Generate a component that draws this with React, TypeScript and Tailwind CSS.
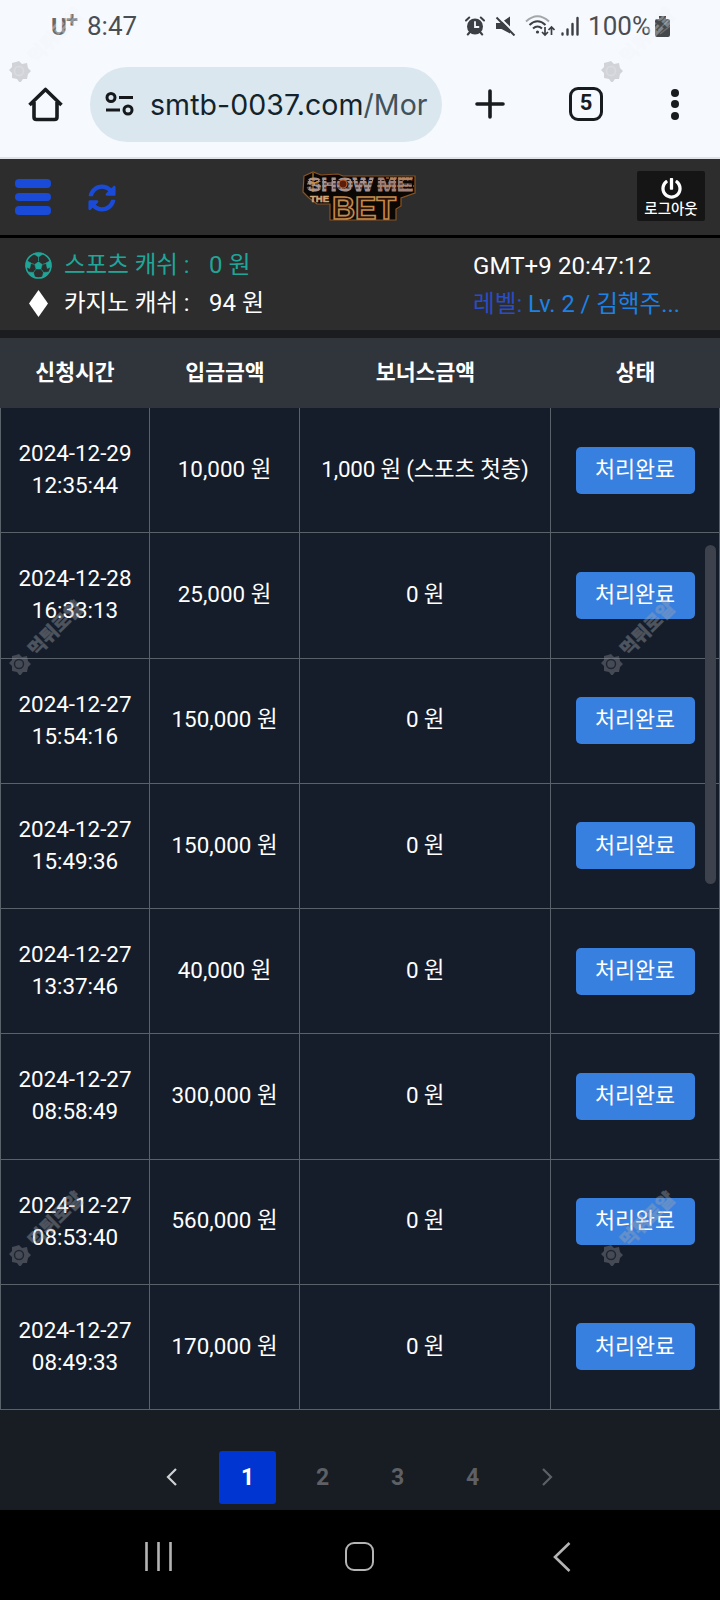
import { FaSyncAlt, FaPowerOff } from "react-icons/fa";

const rows = [
  { date: "2024-12-29", time: "12:35:44", amount: "10,000 원", bonus: "1,000 원 (스포츠 첫충)" },
  { date: "2024-12-28", time: "16:33:13", amount: "25,000 원", bonus: "0 원" },
  { date: "2024-12-27", time: "15:54:16", amount: "150,000 원", bonus: "0 원" },
  { date: "2024-12-27", time: "15:49:36", amount: "150,000 원", bonus: "0 원" },
  { date: "2024-12-27", time: "13:37:46", amount: "40,000 원", bonus: "0 원" },
  { date: "2024-12-27", time: "08:58:49", amount: "300,000 원", bonus: "0 원" },
  { date: "2024-12-27", time: "08:53:40", amount: "560,000 원", bonus: "0 원" },
  { date: "2024-12-27", time: "08:49:33", amount: "170,000 원", bonus: "0 원" },
];

function StatusBar() {
  return (
    <div className="flex h-[52px] items-center justify-between pl-[51px] pr-[50px] text-[26px] text-[#4a4d51]">
      <div className="flex items-center">
        <span className="mt-px w-[15px] text-[24px] font-bold leading-none text-[#66696c]">U</span>
        <span className="mb-3 w-[21px] text-[22px] font-bold leading-none text-[#66696c]">+</span>
        <span>8:47</span>
      </div>
      <div className="flex items-center">
        {/* alarm */}
        <svg className="mr-[10px]" width="20" height="20" viewBox="0 0 20 20" fill="none" stroke="#3c3f43" strokeWidth="2" strokeLinecap="round">
          <circle cx="10" cy="10.5" r="8" fill="#3c3f43" stroke="none" />
          <path d="M1 4.5 4.2 1.5M19 4.5 15.8 1.5M4.5 16.5 2.8 18.5M15.5 16.5 17.2 18.5" />
          <path d="M10 6v5h3.5" stroke="#f6f9fe" strokeWidth="1.8" />
        </svg>
        {/* muted */}
        <svg className="mr-[9px]" width="21" height="20" viewBox="0 0 21 20">
          <path d="M1 7h4.5L15 .5v17L6.500 13H1z" fill="#3c3f43" />
          <path d="M2.500 -.5 21 18" stroke="#f6f9fe" strokeWidth="2" />
          <path d="M1.500 1.500 19.500 19.500" stroke="#3c3f43" strokeWidth="2" />
        </svg>
        {/* wifi */}
        <svg className="mr-[6px]" width="30" height="22" viewBox="0 0 30 22" fill="none" stroke="#3c3f43" strokeWidth="2">
          <path d="M1 6.500Q12.500-4 24 6.500" stroke="#a3a7aa" />
          <path d="M4.500 10Q12.500 2.500 20.500 10M8 13.500Q12.500 9.500 17 13.500" />
          <circle cx="12.500" cy="17" r="1.600" fill="#3c3f43" stroke="none" />
          <path d="M20 12v8m-3-3 3 3 3-3M26.500 20v-8m-3 3 3-3 3 3" strokeWidth="1.700" />
        </svg>
        <svg className="mr-[9px]" width="18" height="20" viewBox="0 0 18 20" stroke="#3c3f43" strokeWidth="2.400" strokeLinecap="round">
          <path d="M1.500 17.500v1M6.500 13.500v5M11.500 8v10.500M16.500 2v16.500" />
        </svg>
        <span className="mr-[4px]">100%</span>
        <svg width="15" height="21" viewBox="0 0 15 21">
          <path d="M4 0h7v3h2q2 0 2 2v14q0 2-2 2H2q-2 0-2-2V5q0-2 2-2h2z" fill="#45484a" />
          <path d="M3 14 13 5M5 18l10-8" stroke="#6c6e70" strokeWidth="1.500" />
        </svg>
      </div>
    </div>
  );
}

function BrowserBar() {
  return (
    <div className="flex h-[105px] items-center pb-px">
      <svg className="ml-[28px]" width="35" height="35" viewBox="0 0 35 35" fill="none" stroke="#191c1f" strokeWidth="3.600" strokeLinejoin="round">
        <path d="M1.500 18 17.500 2.500 33.500 18M6 15v15q0 2.500 2.500 2.500h18q2.500 0 2.500-2.500V15" />
      </svg>
      <div className="ml-[27px] flex h-[75px] w-[352px] items-center rounded-full bg-[#dae7ef] pl-[15px]">
        <svg width="30" height="24" viewBox="0 0 30 24" fill="none" stroke="#16191c" strokeWidth="3">
          <circle cx="6" cy="5.500" r="4" />
          <path d="M14 5.500h14M1 18h14" />
          <circle cx="23" cy="18" r="4" />
        </svg>
        <div className="ml-[15px] mt-[2px] w-[280px] overflow-hidden whitespace-nowrap font-[Inter,sans-serif] text-[28.500px] tracking-[0.07px] text-[#13232b]">
          smtb-0037.com<span className="text-[#42525a]">/Mor</span>
        </div>
      </div>
      <svg className="ml-[33px]" width="30" height="30" viewBox="0 0 30 30" stroke="#191c1f" strokeWidth="3.600" strokeLinecap="round">
        <path d="M15 2v26M2 15h26" />
      </svg>
      <div className="ml-[64px] flex h-[34px] w-[34px] items-center justify-center rounded-[9px] border-[3.5px] border-[#191c1f] pb-[2px] text-[22px] font-bold leading-none text-[#191c1f]">
        5
      </div>
      <div className="ml-[68px] flex flex-col gap-[3.500px]">
        <i className="size-[8px] rounded-full bg-[#191c1f]" />
        <i className="size-[8px] rounded-full bg-[#191c1f]" />
        <i className="size-[8px] rounded-full bg-[#191c1f]" />
      </div>
    </div>
  );
}

function Logo() {
  return (
    <svg width="120" height="54" viewBox="0 0 120 54" fontFamily="'Liberation Sans', sans-serif" fontWeight="700">
      <path d="M4 6 13 2l8 3 17-1 5 2h72v17l-14 5v8l-5 3v11H30V34H17L9 28 3 22z" fill="#0b0705" stroke="#8a5320" strokeWidth="1.200" />
      <text x="7" y="21" fontSize="19" textLength="66" lengthAdjust="spacingAndGlyphs" fill="#a79391" stroke="#a79391" strokeWidth="1">SHOW</text>
      <text x="77" y="21" fontSize="19" textLength="36" lengthAdjust="spacingAndGlyphs" fill="#a08078" stroke="#a08078" strokeWidth="1">ME</text>
      <path d="M6 10.500h68M77 10.500h37M6 14h68M77 14h37M6 18h68M77 18h37" stroke="#1a0e0b" strokeWidth="0.900" strokeDasharray="3 1.500" />
      <path d="M77 16h37M86 8h28" stroke="#c98545" strokeWidth="1" strokeDasharray="3 1" />
      <circle cx="43" cy="14" r="4" fill="#5a1f0a" stroke="#c0612a" strokeWidth="1.200" />
      <path d="M13 3v19M7 14l12-2" stroke="#d9963c" strokeWidth="1" />
      <text x="10" y="32" fontSize="9" textLength="19" lengthAdjust="spacingAndGlyphs" fill="#d0a878" stroke="#d0a878" strokeWidth="0.500">THE</text>
      <text x="32" y="49" fontSize="32" textLength="64" lengthAdjust="spacingAndGlyphs" fill="#2a140b" stroke="#c48a4c" strokeWidth="1.600">BET</text>
    </svg>
  );
}

function SiteHeader() {
  return (
    <header className="flex h-[79px] items-center justify-between border-b-[3px] border-black bg-[#2d2d2d] pl-[15px] pr-[15px]">
      <div className="flex w-[250px] items-center">
        <div className="flex flex-col gap-[5px]">
          <i className="h-[8.500px] w-[36px] rounded-[4px] bg-[#194bd8]" />
          <i className="h-[8.500px] w-[36px] rounded-[4px] bg-[#194bd8]" />
          <i className="h-[8.500px] w-[36px] rounded-[4px] bg-[#194bd8]" />
        </div>
        <FaSyncAlt className="ml-[37px] mt-[2px] text-[28px] text-[#194bd8]" />
      </div>
      <Logo />
      <div className="flex w-[250px] justify-end">
        <div className="mb-[2px] flex h-[50px] w-[68px] flex-col items-center rounded-[2px] bg-[#151515] pt-[7px] text-[14.500px] text-white">
          <FaPowerOff className="text-[21px]" />
          <span className="mt-[3px] whitespace-nowrap font-medium leading-[16px]">로그아웃</span>
        </div>
      </div>
    </header>
  );
}

function Ball() {
  return (
    <svg width="27" height="27" viewBox="0 0 27 27" fill="#1fa698" stroke="#1fa698">
      <circle cx="13.500" cy="13.500" r="12.500" fill="none" strokeWidth="1.600" />
      <path d="M13.500 9.800 17.300 12.500 15.900 17H11.100L9.700 12.500z" strokeWidth="0.500" />
      <path d="M13.500 9V5M17.800 12.300 22 11M16.200 17.300 19 21M10.800 17.300 8 21M9.200 12.300 5 11" strokeWidth="0.700" />
      <path d="M8.500 1.700 13.500 5 18.500 1.700 13.500.9zM25.500 8.500 21 11l1.300 5.500 4-1.500zM1.500 8.500 6 11l-1.300 5.500-4-1.500zM17 26 18.500 20.500l5-.5-2 3.500zM10 26 8.500 20.500 3.500 20l2 3.500z" strokeWidth="0.500" />
    </svg>
  );
}

function Balance() {
  return (
    <div className="flex h-[92px] bg-[#2d2d2d] pt-[9px] text-[24px] leading-[38px] text-white">
      <div className="w-[473px] pl-[25px]">
        <div className="-mt-px flex h-[38px] items-center text-[#1fa698]">
          <Ball />
          <span className="ml-[12px] w-[145px] whitespace-nowrap text-[23.500px]">스포츠 캐쉬 :</span>
          <span>0 원</span>
        </div>
        <div className="flex h-[38px] items-center">
          <svg width="27" height="27" viewBox="0 0 27 27">
            <path d="M13.500 0 23 13.500 13.500 27 4 13.500z" fill="#fff" />
          </svg>
          <span className="ml-[12px] w-[145px] whitespace-nowrap text-[23.500px]">카지노 캐쉬 :</span>
          <span>94 원</span>
        </div>
      </div>
      <div className="whitespace-nowrap">
        <div className="h-[38px] tracking-[0.1px]">GMT+9 20:47:12</div>
        <div className="text-[23.600px] text-[#1c82e6]">
          <span className="text-[#2a4cc4]">레벨:</span> Lv. 2 / 김핵주...
        </div>
      </div>
    </div>
  );
}

function History() {
  return (
    <div className="text-[22.400px] text-white">
      <div className="flex h-[70px] items-center bg-[#30343b] pt-px text-center text-[21.600px] font-bold">
        <div className="w-[150px]">신청시간</div>
        <div className="w-[150px]">입금금액</div>
        <div className="w-[251px]">보너스금액</div>
        <div className="w-[169px]">상태</div>
      </div>
      <div className="flex h-[1002px] flex-col border-l border-[#59616a] bg-[#151d2b]">
        {rows.map((row, i) => (
          <div key={i} className="flex flex-1 border-b border-[#59616a] text-center *:flex *:items-center *:justify-center *:border-r *:border-[#59616a]">
            <div className="w-[149px] flex-col pb-[2px] leading-[32px]">
              <span>{row.date}</span>
              <span>{row.time}</span>
            </div>
            <div className="w-[150px] pb-px">{row.amount}</div>
            <div className="w-[251px] whitespace-nowrap pb-px tracking-[-0.2px]">{row.bonus}</div>
            <div className="w-[169px]">
              <button className="h-[47px] w-[119px] rounded-[5px] bg-[#3880e0] text-[21.800px]">처리완료</button>
            </div>
          </div>
        ))}
      </div>
    </div>
  );
}

function Pagination() {
  return (
    <div className="flex h-[100px] items-center justify-center bg-[#181c23] pt-[35px] text-[23px] font-bold text-[#5d6064]">
      <div className="flex w-[75px] justify-center pb-[2px] pr-[2px]">
        <svg width="11" height="18" viewBox="0 0 11 18" fill="none" stroke="#cfd2d5" strokeWidth="2.200">
          <path d="M10 1 2 9l8 8" />
        </svg>
      </div>
      <div className="flex w-[75px] justify-center">
        <span className="flex h-[53px] w-[57px] items-center justify-center rounded-[3px] bg-[#0035d1] pt-px text-white">1</span>
      </div>
      <div className="w-[75px] pt-px text-center">2</div>
      <div className="w-[75px] pt-px text-center">3</div>
      <div className="w-[75px] pt-px text-center">4</div>
      <div className="flex w-[75px] justify-center pb-[2px]">
        <svg width="11" height="18" viewBox="0 0 11 18" fill="none" stroke="#5d6064" strokeWidth="2.200">
          <path d="M1 1l8 8-8 8" />
        </svg>
      </div>
    </div>
  );
}

function NavBar() {
  return (
    <div className="flex h-[90px] items-center bg-black pt-[3px]">
      <svg className="ml-[144px]" width="29" height="29" viewBox="0 0 29 29" stroke="#b4b4b4" strokeWidth="2.600">
        <path d="M2.500 0v29M14.500 0v29M26.500 0v29" />
      </svg>
      <div className="ml-[172px] size-[29px] rounded-[9px] border-[2.500px] border-[#b4b4b4]" />
      <svg className="ml-[179px]" width="18" height="30" viewBox="0 0 18 30" fill="none" stroke="#b4b4b4" strokeWidth="2.600">
        <path d="M16.500 1 2 15l14.500 14" />
      </svg>
    </div>
  );
}

// stamp laid over the page: badge plus slanted label
function Stamp({ className, light }: { className: string; light?: boolean }) {
  return (
    <div className={"pointer-events-none absolute " + className}>
      <svg width="90" height="90" viewBox="0 0 90 90" opacity={light ? 0.35 : 0.4}>
        <path d="M11 69l3 3 5-1 1 5 3 3-3 3-1 5-4 0-3 4-3-4-5-1 0-5-3-3 3-3 0-4 4-1z" fill="#8d8f93" />
        <circle cx="11" cy="79" r="4.500" fill="none" stroke={light ? "#a5a7aa" : "#30353f"} strokeWidth="1.500" />
        <text
          transform="translate(28 72) rotate(-45)"
          fontSize="18.500"
          fontWeight="900"
          textLength="68"
          fill={light ? "#f2f4f8" : "#a4a6aa"}
          stroke={light ? "none" : "#a4a6aa"}
          strokeWidth="0.400"
        >
          먹튀로얄
        </text>
      </svg>
    </div>
  );
}

export default function App() {
  return (
    <div className="relative h-[1600px] w-[720px] overflow-hidden bg-[#1a1c1f] font-[Roboto,'Noto_Sans_CJK_KR',sans-serif]">
      <div className="h-[159px] border-b-2 border-[#dfe3e7] bg-[#f6f9fe]">
        <StatusBar />
        <BrowserBar />
      </div>
      <SiteHeader />
      <Balance />
      <div className="h-[8px] bg-[#1a1c1f]" />
      <History />
      <Pagination />
      <NavBar />

      <div className="absolute left-[705px] top-[545px] h-[339px] w-[11px] rounded-full bg-[#3d424d]" />
      <Stamp className="left-[8px] top-[-8px]" light />
      <Stamp className="left-[600px] top-[-8px]" light />
      <Stamp className="left-[8px] top-[585px]" />
      <Stamp className="left-[600px] top-[585px]" />
      <Stamp className="left-[8px] top-[1176px]" />
      <Stamp className="left-[600px] top-[1176px]" />
    </div>
  );
}
